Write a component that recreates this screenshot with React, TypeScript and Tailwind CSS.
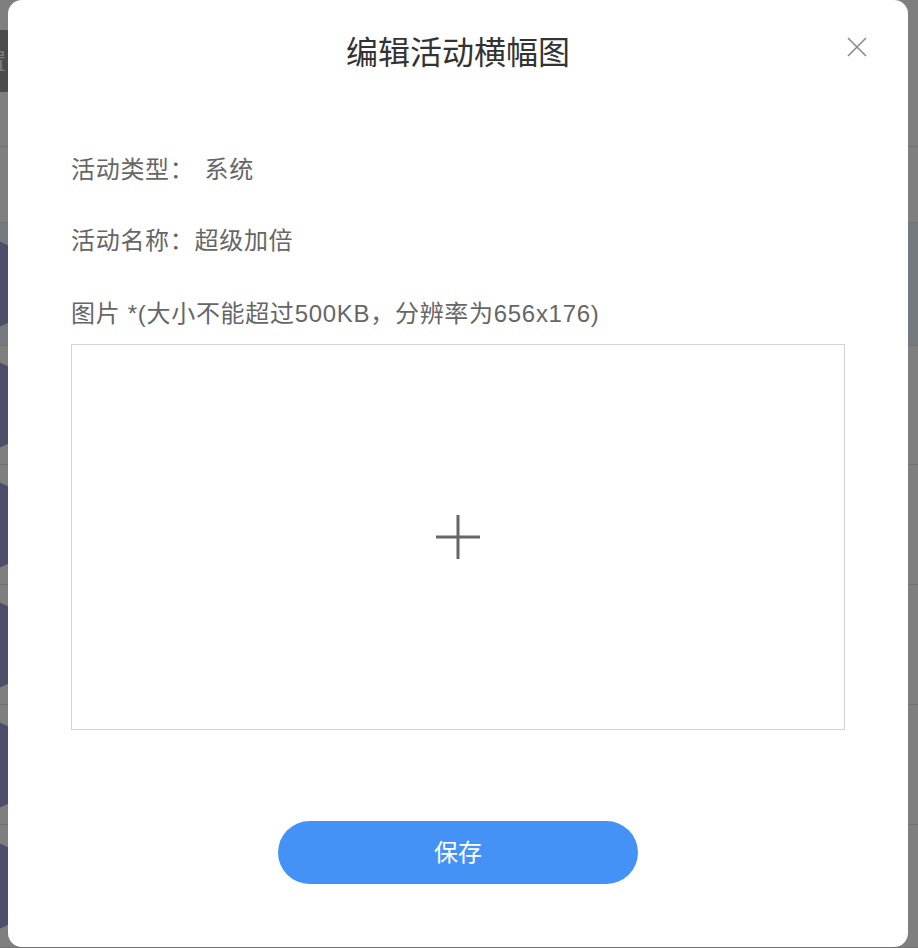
const ROWS = [
  { h: "h-[123px]", tint: true, dot: "" },
  { h: "h-[119px]", tint: false, dot: "" },
  { h: "h-[120px]", tint: false, dot: "bg-[#e08a2a]" },
  { h: "h-[120px]", tint: false, dot: "bg-[#d9502b]" },
  { h: "h-[120px]", tint: false, dot: "" },
  { h: "h-[123px]", tint: false, dot: "bg-[#3a2a1a]" },
];

function BackgroundPage() {
  return (
    <div className="flex flex-col w-full">
      <div className="h-[147px] border-b border-[#e2e2e2] pt-[30px]">
        <div className="h-[62px] w-[40px] -ml-[30px] rounded bg-[#989898] flex items-center justify-end pr-1 text-[22px] text-white">
          置
        </div>
      </div>
      <div className="h-[76px] border-b border-[#e2e2e2]" />
      {ROWS.map((r, i) => (
        <div
          key={i}
          className={`${r.h} border-b border-[#e2e2e2] flex items-center ${r.tint ? "bg-[#e9f2fb]" : "bg-white"}`}
        >
          <div className="relative -ml-[60px] h-[90px] w-[90px] rounded-full bg-[#9a9ad8]">
            {r.dot && <div className={`absolute right-[8px] top-[40px] h-[12px] w-[10px] rounded-full ${r.dot}`} />}
          </div>
        </div>
      ))}
    </div>
  );
}

export default function App() {
  return (
    <div
      className="relative h-[948px] w-full overflow-hidden bg-white"
      style={{ fontFamily: '"Liberation Sans", "Noto Sans CJK SC", sans-serif' }}
    >
      <BackgroundPage />
      <div className="absolute inset-0 bg-black/50" />

      <div className="absolute left-[8px] top-0 flex h-[947px] w-[900px] flex-col rounded-[14px] bg-white">
        <h2 className="pt-[31px] text-center text-[32px] leading-[44px] font-normal text-[#333]">
          编辑活动横幅图
        </h2>
        <button className="absolute right-[41px] top-[37px]">
          <svg width="20" height="20" viewBox="0 0 20 20">
            <path d="M1 1L19 19M19 1L1 19" stroke="#8a8a8a" strokeWidth="1.6" fill="none" />
          </svg>
        </button>

        <div className="flex flex-col px-[63px] text-[24px] leading-[32px] tracking-[0.7px] text-[#666]">
          <div className="mt-[79px] flex">
            <span>活动类型：</span>
            <span className="ml-[10px]">系统</span>
          </div>
          <div className="mt-[39px]">活动名称：超级加倍</div>
          <div className="mt-[41px]">图片 *(大小不能超过500KB，分辨率为656x176)</div>
          <div className="mt-[14px] flex h-[386px] w-[774px] items-center justify-center border border-[#d4d4d4]">
            <svg width="46" height="46" viewBox="0 0 46 46">
              <path d="M23 1v44M1 23h44" stroke="#666" strokeWidth="3" fill="none" />
            </svg>
          </div>
        </div>

        <div className="mt-[91px] flex justify-center">
          <button className="h-[63px] w-[360px] rounded-full bg-[#4592f7] text-[24px] text-white">
            保存
          </button>
        </div>
      </div>
    </div>
  );
}
